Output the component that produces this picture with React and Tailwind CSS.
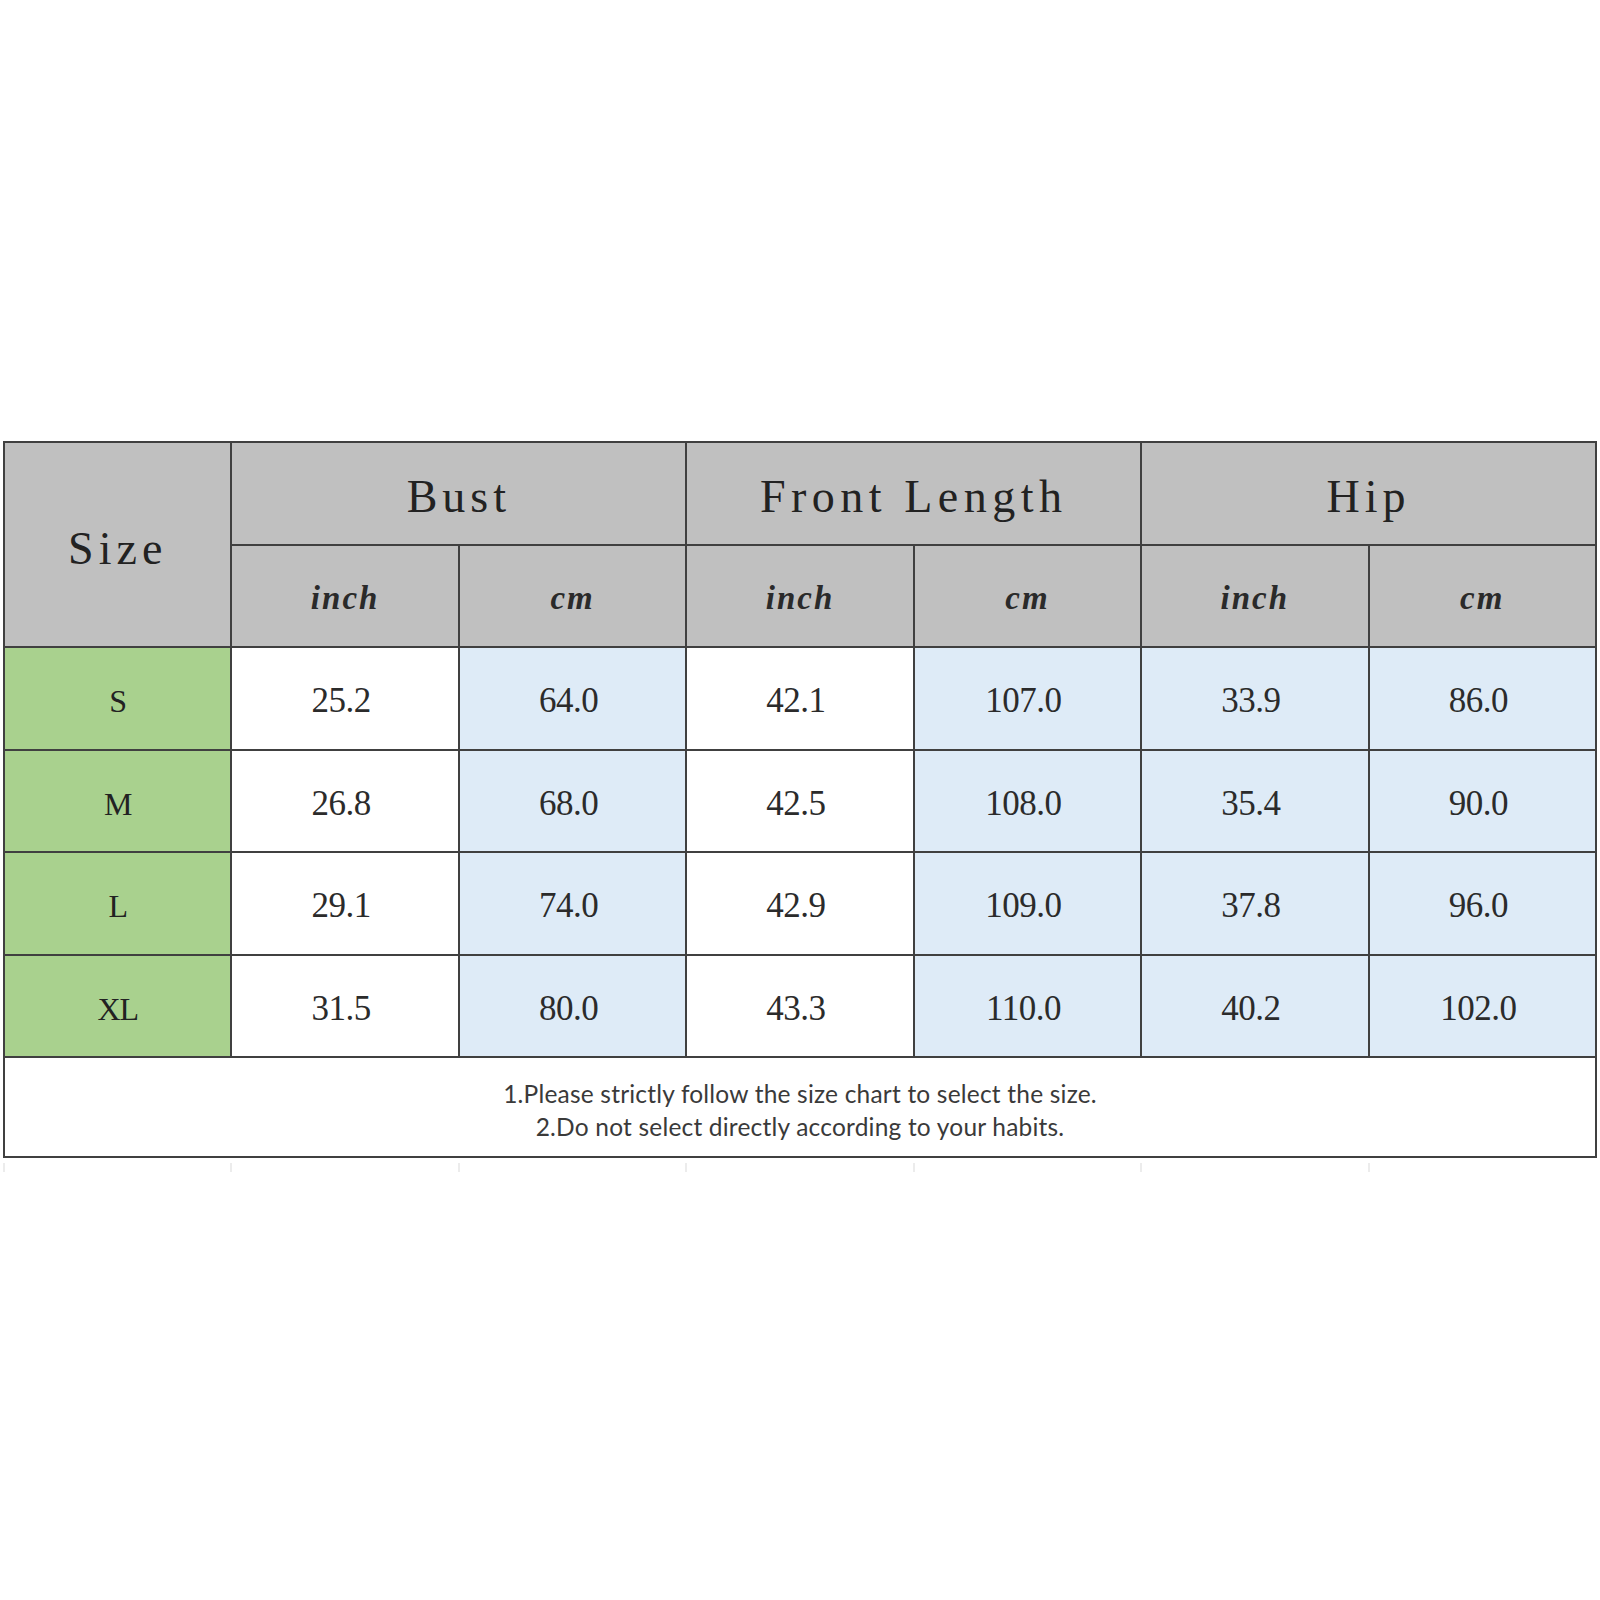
import React from "react";

const rows = [
  ["S", "25.2", "64.0", "42.1", "107.0", "33.9", "86.0"],
  ["M", "26.8", "68.0", "42.5", "108.0", "35.4", "90.0"],
  ["L", "29.1", "74.0", "42.9", "109.0", "37.8", "96.0"],
  ["XL", "31.5", "80.0", "43.3", "110.0", "40.2", "102.0"],
];

const serif = "font-['Liberation_Serif',serif]";
const num = `flex items-center justify-center pt-[6px] pr-[8px] text-[35px] tracking-[-0.5px] text-[#2b2b2b] ${serif}`;

export default function App() {
  return (
    <div className="w-[1600px] h-[1600px] bg-white pt-[441px]">
      <div className="ml-[3px] w-[1594px] border-2 border-[#404040] bg-[#404040] grid grid-cols-7 grid-rows-[repeat(6,100.5px)_98px] gap-[2px]">
        <div className={`row-span-2 bg-[#c0c0c0] flex items-center justify-center pt-[7px] text-[46px] tracking-[5px] text-[#222] ${serif}`}>
          Size
        </div>
        <div className={`col-span-2 bg-[#c0c0c0] flex items-center justify-center pt-[7px] text-[46px] tracking-[5px] text-[#222] ${serif}`}>
          Bust
        </div>
        <div className={`col-span-2 bg-[#c0c0c0] flex items-center justify-center pt-[7px] text-[46px] tracking-[5.5px] text-[#222] ${serif}`}>
          Front Length
        </div>
        <div className={`col-span-2 bg-[#c0c0c0] flex items-center justify-center pt-[7px] text-[46px] tracking-[5px] text-[#222] ${serif}`}>
          Hip
        </div>
        {["inch", "cm", "inch", "cm", "inch", "cm"].map((u, i) => (
          <div
            key={i}
            className={`bg-[#c0c0c0] flex items-center justify-center pt-[6px] text-[33px] italic font-bold tracking-[2px] text-[#2a2a2a] ${serif}`}
          >
            {u}
          </div>
        ))}
        {rows.map((r, ri) => (
          <React.Fragment key={ri}>
            <div className={`bg-[#a9d18e] flex items-center justify-center pt-[6px] text-[32px] tracking-[-1px] text-[#222] ${serif}`}>
              {r[0]}
            </div>
            <div className={`bg-white ${num}`}>{r[1]}</div>
            <div className={`bg-[#deebf7] ${num}`}>{r[2]}</div>
            <div className={`bg-white ${num}`}>{r[3]}</div>
            <div className={`bg-[#deebf7] ${num}`}>{r[4]}</div>
            <div className={`bg-[#deebf7] ${num}`}>{r[5]}</div>
            <div className={`bg-[#deebf7] ${num}`}>{r[6]}</div>
          </React.Fragment>
        ))}
        <div className="col-span-7 bg-white flex flex-col items-center justify-center pt-[5px] font-['Lato',sans-serif] text-[24.5px] leading-[33px] tracking-[0.2px] text-[#3a3a3a]">
          <div>1.Please strictly follow the size chart to select the size.</div>
          <div>2.Do not select directly according to your habits.</div>
        </div>
      </div>
      <div className="ml-[3px] w-[1594px] grid grid-cols-7 gap-[2px] px-[2px] mt-[5px]">
        {[0, 1, 2, 3, 4, 5, 6].map((i) => (
          <div key={i} className="h-[9px] border-l-2 border-[#ececec] -ml-[2px]" />
        ))}
      </div>
    </div>
  );
}
